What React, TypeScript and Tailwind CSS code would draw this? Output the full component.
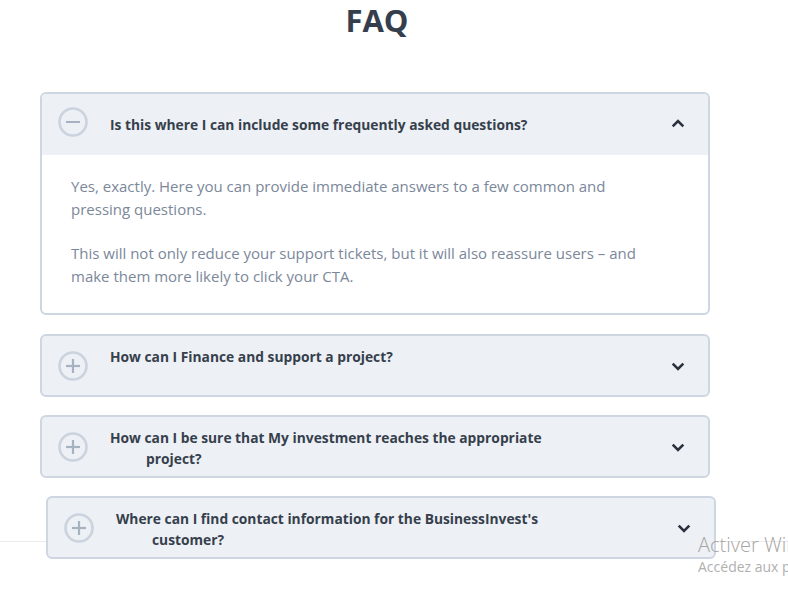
import React from "react";

const font = { fontFamily: '"Open Sans", "Noto Sans", sans-serif' };

function CircleIcon({ open }: { open: boolean }) {
  return (
    <svg width="30" height="30" viewBox="0 0 30 30" fill="none">
      <circle cx="15" cy="15" r="13.5" stroke="#cad3de" strokeWidth="2.6" />
      <line x1="8" y1="15" x2="22" y2="15" stroke="#a7b2c1" strokeWidth="2.2" />
      {!open && <line x1="15" y1="8" x2="15" y2="22" stroke="#a7b2c1" strokeWidth="2.2" />}
    </svg>
  );
}

function Chevron({ up }: { up: boolean }) {
  return (
    <svg width="14" height="9" viewBox="0 0 14 9" fill="none">
      {up ? (
        <polyline points="1.7,7.3 7,2 12.3,7.3" stroke="#2a313c" strokeWidth="2.6" fill="none" />
      ) : (
        <polyline points="1.7,1.7 7,7 12.3,1.7" stroke="#2a313c" strokeWidth="2.6" fill="none" />
      )}
    </svg>
  );
}

function Item({ q, shift = false }: { q: string; shift?: boolean }) {
  return (
    <div
      className={`relative z-10 flex items-start h-[63px] w-[670px] border-2 border-[#cdd6e1] rounded-[6px] bg-[#edf0f5] ${
        shift ? "ml-[6px]" : ""
      }`}
    >
      <div className="ml-[16px] mt-[15px] w-[30px] h-[30px] shrink-0">
        <CircleIcon open={false} />
      </div>
      <div className="ml-[22px] mt-[10px] w-[460px] pl-[36px] indent-[-36px] text-[13.8px] leading-[21px] font-bold text-[#363f4c]">
        {q}
      </div>
      <div className="ml-auto mr-[23px] mt-[26px]">
        <Chevron up={false} />
      </div>
    </div>
  );
}

export default function App() {
  return (
    <div className="relative w-full h-[591px] overflow-hidden bg-white" style={font}>
      <div className="absolute left-0 right-0 top-[541px] h-px bg-[#e9ebee]" />
      <div className="pl-[40px]">
        <h1 className="w-[670px] text-center text-[31px] leading-[40px] font-bold text-[#353e4c] pt-[0px] ml-[2px]">
          FAQ
        </h1>
        <div className="mt-[52px] flex flex-col gap-[18px]">
          <div className="relative z-10 w-[670px] border-2 border-[#cdd6e1] rounded-[6px] overflow-hidden bg-white mb-[1px]">
            <div className="flex items-start h-[61px] bg-[#edf0f5]">
              <div className="ml-[16px] mt-[13px] w-[30px] h-[30px] shrink-0">
                <CircleIcon open={true} />
              </div>
              <div className="ml-[22px] mt-[20px] text-[13.8px] leading-[21px] font-bold text-[#363f4c]">
                Is this where I can include some frequently asked questions?
              </div>
              <div className="ml-auto mr-[23px] mt-[25px]">
                <Chevron up={true} />
              </div>
            </div>
            <div className="pl-[29px] pr-[40px] pt-[20px] pb-[25px] text-[15px] leading-[23px] text-[#7b879a]">
              <p>
                Yes, exactly. Here you can provide immediate answers to a few common and
                <br />
                pressing questions.
              </p>
              <p className="mt-[21px]">
                This will not only reduce your support tickets, but it will also reassure users – and
                <br />
                make them more likely to click your CTA.
              </p>
            </div>
          </div>
          <Item q="How can I Finance and support a project?" />
          <Item q="How can I be sure that My investment reaches the appropriate project?" />
          <Item shift q="Where can I find contact information for the BusinessInvest's customer?" />
        </div>
      </div>
      <div className="absolute left-[698px] top-[531px] whitespace-nowrap z-20 text-[#a6a6a6]">
        <div className="text-[20px] leading-[27px] font-light">Activer Windows</div>
        <div className="text-[14px] leading-[18px] mt-[0px] text-[#b0b0b0]">Accédez aux paramètres pour activer Windows.</div>
      </div>
    </div>
  );
}
